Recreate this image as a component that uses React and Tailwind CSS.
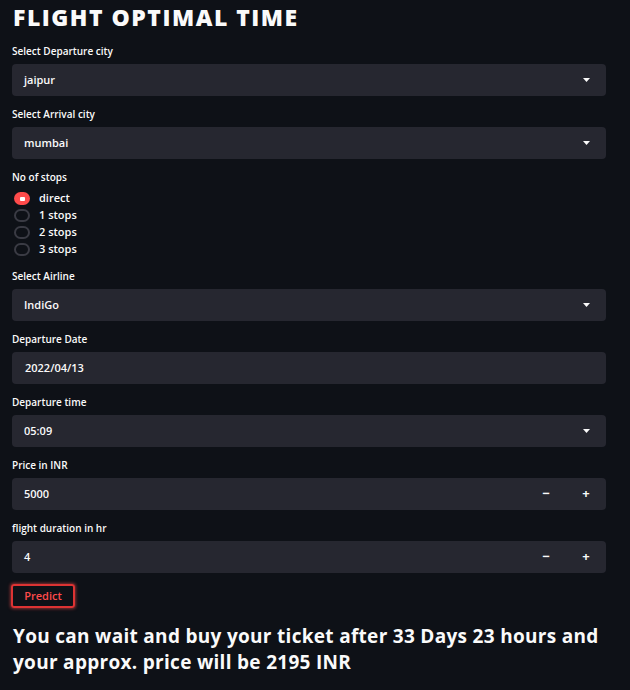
import React, { useState } from "react";

// 드롭다운 화살표
const Caret = () => (
  <svg width="7" height="4" viewBox="0 0 7 4" className="mr-[16px]">
    <path d="M0 0 L7 0 L3.5 4 Z" fill="#fafafa" />
  </svg>
);

const Label = ({ children }) => (
  <div className="text-[10px] leading-[14px] font-semibold text-[#fafafa]">{children}</div>
);

const SelectBox = ({ label, value, caret = true }) => (
  <div className="mb-[11px]">
    <Label>{label}</Label>
    <div className="mt-[6px] h-[32px] rounded-[4px] bg-[#262730] flex items-center justify-between pl-3">
      <span className="text-[11px] font-semibold text-[#fafafa]">{value}</span>
      {caret && <Caret />}
    </div>
  </div>
);

const NumberBox = ({ label, value }) => (
  <div className="mb-[11px]">
    <Label>{label}</Label>
    <div className="mt-[6px] h-[32px] rounded-[4px] bg-[#262730] flex items-center justify-between pl-3">
      <span className="text-[11px] font-semibold text-[#fafafa]">{value}</span>
      <div className="flex items-center text-[#fafafa] font-bold">
        <span className="w-[40px] text-center text-[13px]">−</span>
        <span className="w-[40px] text-center text-[13px]">+</span>
      </div>
    </div>
  </div>
);

const App = () => {
  const [stops, setStops] = useState("direct");
  const options = ["direct", "1 stops", "2 stops", "3 stops"];

  return (
    <div
      className="min-h-[690px] bg-[#0e1117] text-[#fafafa] pl-3 pr-6 pt-[2px]"
      style={{ fontFamily: '"Open Sans", "Lato", sans-serif' }}
    >
      <h1 className="text-[23px] leading-[30px] font-extrabold tracking-[1.5px] mb-[12px] ml-[1px]">
        FLIGHT OPTIMAL TIME
      </h1>

      <SelectBox label="Select Departure city" value="jaipur" />
      <SelectBox label="Select Arrival city" value="mumbai" />

      {/* 경유 횟수 */}
      <div className="mb-[11px]">
        <Label>No of stops</Label>
        <div className="mt-[6px] mb-[1px] flex flex-col">
          {options.map((o) => (
            <label
              key={o}
              className="h-[17px] flex items-center cursor-pointer"
              onClick={() => setStops(o)}
            >
              <span
                className={`w-[16px] h-[13px] rounded-full flex items-center justify-center ml-[2px] ${
                  stops === o ? "bg-[#ff4b4b]" : "border-2 border-[#3a3b44]"
                }`}
              >
                {stops === o && <span className="w-[5px] h-[4px] rounded-[1px] bg-white" />}
              </span>
              <span className="ml-[9px] text-[11px] font-semibold">{o}</span>
            </label>
          ))}
        </div>
      </div>

      <SelectBox label="Select Airline" value="IndiGo" />
      <SelectBox label="Departure Date" value={<span className="ml-[1px]">2022/04/13</span>} caret={false} />
      <SelectBox label="Departure time" value="05:09" />
      <NumberBox label="Price in INR" value="5000" />
      <NumberBox label="flight duration in hr" value="4" />

      <button className="block h-[24px] w-[64px] -ml-[1px] mt-[1px] rounded-[3px] border-2 border-[#d33] text-[#ff4b4b] text-[11px] font-semibold shadow-[0_0_3px_1px_rgba(255,75,75,0.5)]">
        Predict
      </button>

      <p className="mt-[15px] text-[19px] leading-[26px] font-bold tracking-[0.3px] ml-[1px]">
        You can wait and buy your ticket after 33 Days 23 hours and your approx. price will be 2195 INR
      </p>
    </div>
  );
};

export default App;
